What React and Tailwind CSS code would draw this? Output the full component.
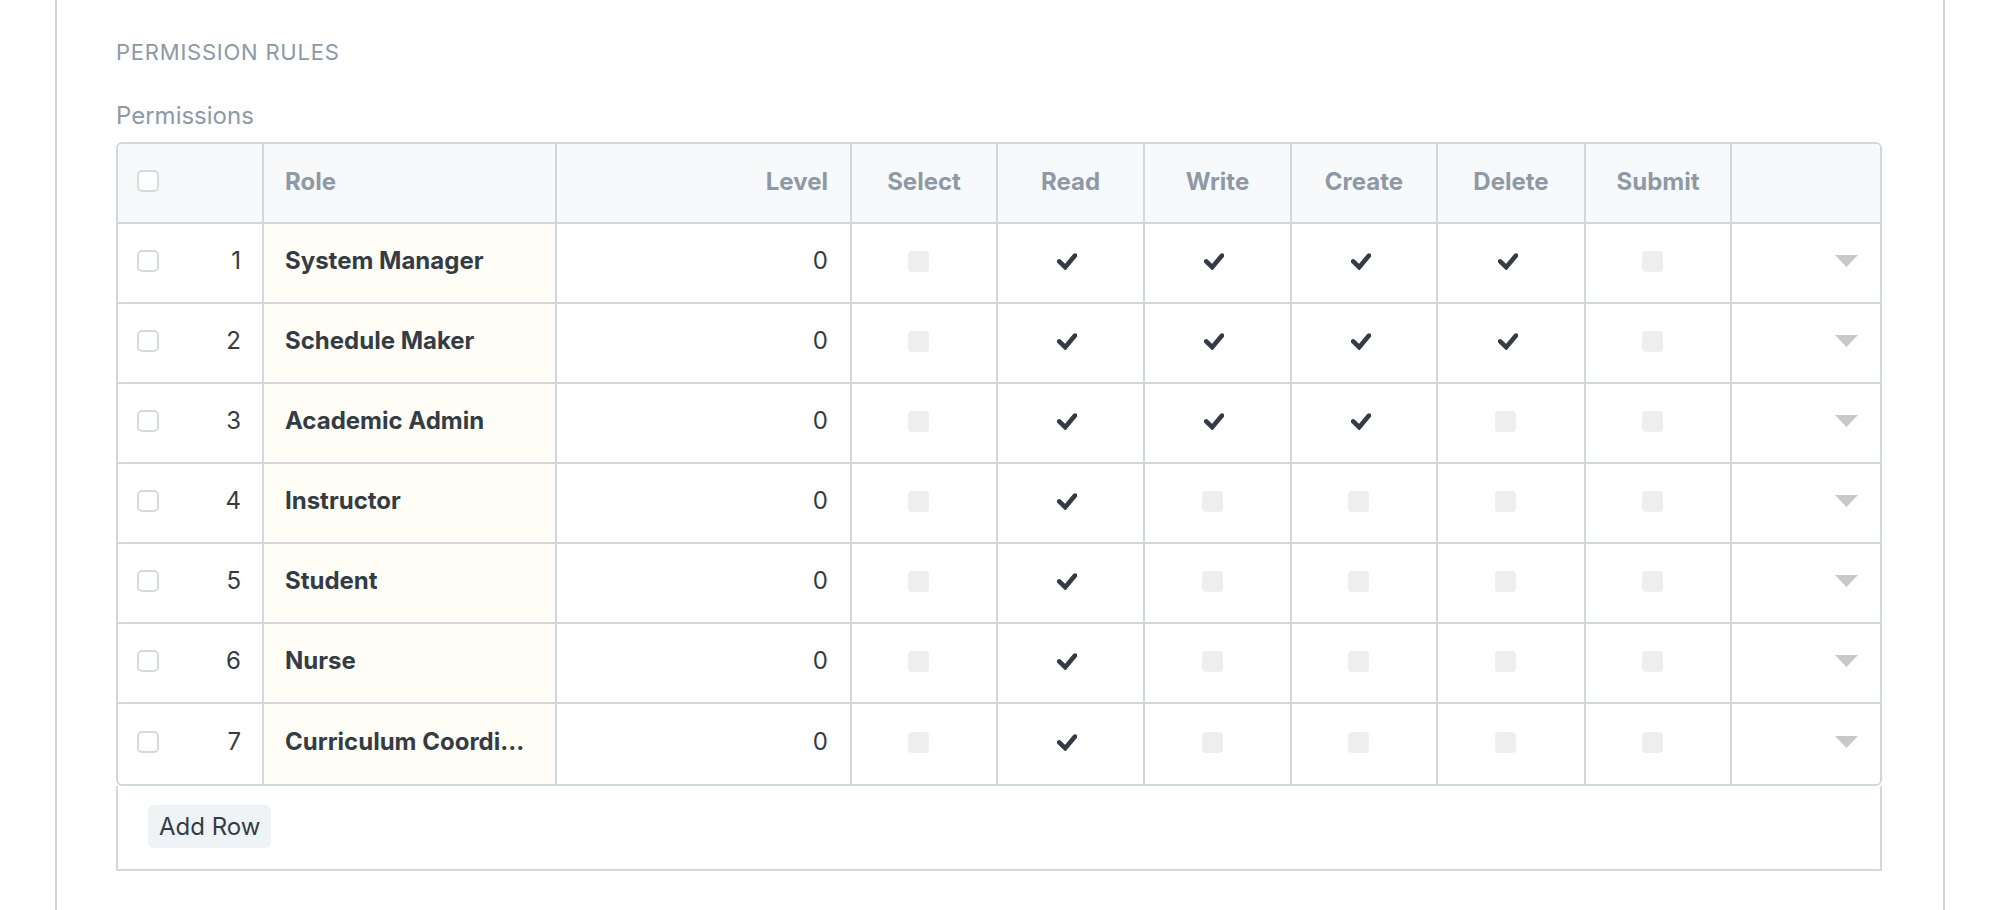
import React from "react";

const W = [
  "w-[146px]",
  "w-[293px]",
  "w-[295px]",
  "w-[146px]",
  "w-[147px]",
  "w-[147px]",
  "w-[146px]",
  "w-[148px]",
  "w-[146px]",
  "w-[148px]",
];

const rows = [
  { n: 1, role: "System Manager", p: [false, true, true, true, true, false] },
  { n: 2, role: "Schedule Maker", p: [false, true, true, true, true, false] },
  { n: 3, role: "Academic Admin", p: [false, true, true, true, false, false] },
  { n: 4, role: "Instructor", p: [false, true, false, false, false, false] },
  { n: 5, role: "Student", p: [false, true, false, false, false, false] },
  { n: 6, role: "Nurse", p: [false, true, false, false, false, false] },
  { n: 7, role: "Curriculum Coordi...", p: [false, true, false, false, false, false] },
];

const perms = ["Select", "Read", "Write", "Create", "Delete", "Submit"];

function Check() {
  return (
    <svg width="20" height="17" viewBox="0 0 20 17" className="block">
      <polyline
        points="2.2,8.4 8.2,14.2 18,2.6"
        fill="none"
        stroke="#333c44"
        strokeWidth="4.6"
        strokeLinecap="round"
        strokeLinejoin="miter"
      />
    </svg>
  );
}

function SelectBox() {
  return (
    <div className="h-[22px] w-[22px] rounded-[5px] border-2 border-[#d5dadf] bg-white" />
  );
}

function Caret() {
  return (
    <svg width="23" height="12" viewBox="0 0 23 12" className="block">
      <polygon points="0,0 23,0 11.5,12" fill="#c8c8c8" />
    </svg>
  );
}

export default function App() {
  return (
    <div className="h-[910px] w-[2010px] bg-white font-['Inter','Noto_Sans',sans-serif] overflow-hidden">
      <div className="ml-[55px] h-[910px] w-[1890px] border-x-2 border-[#d1d8dd] pl-[59px] pr-[61px] pt-[41px]">
        <div className="text-[22px] leading-[22px] uppercase tracking-[0.035em] text-[#8d99a6]">
          Permission Rules
        </div>
        <div className="mt-[41px] text-[24px] leading-[24px] text-[#8d99a6]">Permissions</div>

        <div className="mt-[14px] w-[1766px]">
          <div className="overflow-hidden rounded-[6px] border-2 border-[#d1d8dd]">
            {/* header */}
            <div className="flex h-[80px] border-b-2 border-[#d1d8dd] bg-[#f7f9fa] text-[24px] font-bold text-[#8d99a6]">
              <div className={`${W[0]} flex items-center border-r-2 border-[#d1d8dd] pb-[4px] pl-[19px]`}>
                <SelectBox />
              </div>
              <div className={`${W[1]} flex items-center border-r-2 border-[#d1d8dd] pb-[2px] pl-[21px]`}>
                Role
              </div>
              <div className={`${W[2]} flex items-center justify-end border-r-2 border-[#d1d8dd] pb-[2px] pr-[22px]`}>
                Level
              </div>
              {perms.map((p, i) => (
                <div
                  key={p}
                  className={`${W[3 + i]} flex items-center justify-center border-r-2 border-[#d1d8dd] pb-[2px]`}
                >
                  {p}
                </div>
              ))}
              <div className={`${W[9]}`} />
            </div>

            {/* rows */}
            {rows.map((r, ri) => (
              <div
                key={r.n}
                className={`flex h-[80px] text-[24px] text-[#333c44] ${
                  ri < rows.length - 1 ? "border-b-2 border-[#d1d8dd]" : ""
                }`}
              >
                <div className={`${W[0]} flex items-center justify-between border-r-2 border-[#d1d8dd] pb-[4px] pl-[19px] pr-[21px]`}>
                  <SelectBox />
                  <span>{r.n}</span>
                </div>
                <div className={`${W[1]} flex items-center border-r-2 border-[#d1d8dd] bg-[#fffdf5] pb-[4px] pl-[21px] font-bold whitespace-nowrap`}>
                  {r.role}
                </div>
                <div className={`${W[2]} flex items-center justify-end border-r-2 border-[#d1d8dd] pb-[4px] pr-[22px]`}>
                  0
                </div>
                {r.p.map((on, i) => (
                  <div
                    key={i}
                    className={`${W[3 + i]} flex items-center justify-center border-r-2 border-[#d1d8dd] pb-[4px] ${
                      on ? "pr-[7px]" : "pr-[11px]"
                    }`}
                  >
                    {on ? (
                      <Check />
                    ) : (
                      <div className="h-[21px] w-[21px] rounded-[4px] bg-[#eeeeee]" />
                    )}
                  </div>
                ))}
                <div className={`${W[9]} flex items-center justify-end pb-[4px] pr-[22px]`}>
                  <Caret />
                </div>
              </div>
            ))}
          </div>

          {/* footer */}
          <div className="h-[85px] border-2 border-t-0 border-[#d1d8dd] pl-[30px] pt-[19px]">
            <button className="h-[43px] rounded-[6px] bg-[#f0f3f6] px-[11px] text-[24px] leading-[24px] text-[#333c44]">
              Add Row
            </button>
          </div>
        </div>
      </div>
    </div>
  );
}
